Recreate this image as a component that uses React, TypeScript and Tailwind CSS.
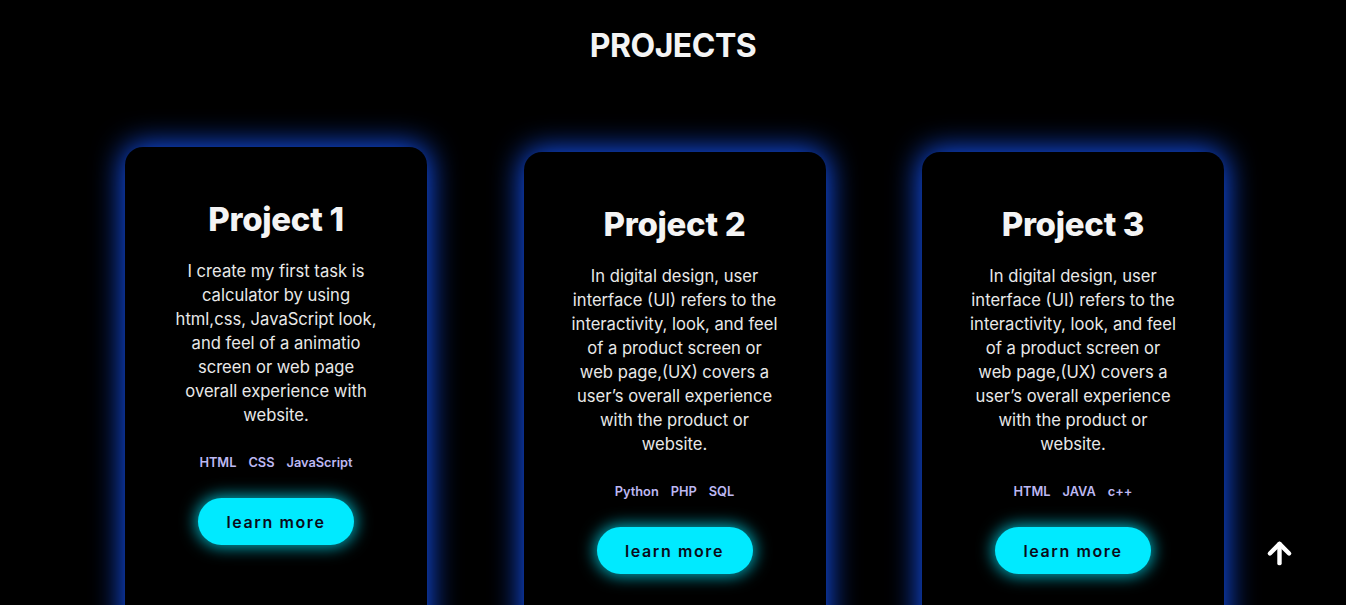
import React from "react";
import { ArrowUp } from "lucide-react";

type Project = {
  title: string;
  lines: string[];
  tags: string[];
  raised?: boolean;
};

const projects: Project[] = [
  {
    title: "Project 1",
    lines: [
      "I create my first task is",
      "calculator by using",
      "html,css, JavaScript look,",
      "and feel of a animatio",
      "screen or web page",
      "overall experience with",
      "website.",
    ],
    tags: ["HTML", "CSS", "JavaScript"],
    raised: true,
  },
  {
    title: "Project 2",
    lines: [
      "In digital design, user",
      "interface (UI) refers to the",
      "interactivity, look, and feel",
      "of a product screen or",
      "web page,(UX) covers a",
      "user\u2019s overall experience",
      "with the product or",
      "website.",
    ],
    tags: ["Python", "PHP", "SQL"],
  },
  {
    title: "Project 3",
    lines: [
      "In digital design, user",
      "interface (UI) refers to the",
      "interactivity, look, and feel",
      "of a product screen or",
      "web page,(UX) covers a",
      "user\u2019s overall experience",
      "with the product or",
      "website.",
    ],
    tags: ["HTML", "JAVA", "c++"],
  },
];

function Card({ p }: { p: Project }) {
  return (
    <div
      className={
        "w-[302px] h-[500px] shrink-0 rounded-[18px] bg-black px-[30px] pt-[48px] flex flex-col items-center text-center shadow-[0_0_30px_2px_rgb(20,85,255)] " +
        (p.raised ? "-translate-y-[5px]" : "")
      }
    >
      <h2 className="text-[33px] leading-[48px] font-extrabold text-[#f4f4f4] tracking-[-0.3px]">
        {p.title}
      </h2>
      <p className="mt-[16px] text-[16.6px] leading-[24px] text-[#e8e8e8] whitespace-nowrap">
        {p.lines.map((l, i) => (
          <React.Fragment key={i}>
            {l}
            {i < p.lines.length - 1 && <br />}
          </React.Fragment>
        ))}
      </p>
      <div className="mt-[27px] flex gap-[12px] text-[12.8px] leading-[18px] font-semibold text-[#bdb8f2]">
        {p.tags.map((t) => (
          <span key={t}>{t}</span>
        ))}
      </div>
      <button className="mt-[26px] w-[156px] h-[47px] rounded-full bg-[#00eaff] text-[16px] font-semibold tracking-[1.6px] text-[#0b0b1a] shadow-[0_0_16px_2px_rgba(0,234,255,0.75)]">
        learn more
      </button>
    </div>
  );
}

export default function App() {
  return (
    <div
      className="min-h-screen bg-black overflow-hidden"
      style={{ fontFamily: "Inter, 'Noto Sans', sans-serif" }}
    >
      <h1 className="pt-[22px] text-center text-[32px] leading-[48px] font-bold text-[#f4f4f4] tracking-[-0.5px]">
        PROJECTS
      </h1>
      <div className="mt-[82px] pl-[3px] flex justify-center gap-[96.5px]">
        {projects.map((p) => (
          <Card key={p.title} p={p} />
        ))}
      </div>
      <button className="fixed right-[50px] bottom-[35px] text-white">
        <ArrowUp size={33} strokeWidth={3.2} />
      </button>
    </div>
  );
}
